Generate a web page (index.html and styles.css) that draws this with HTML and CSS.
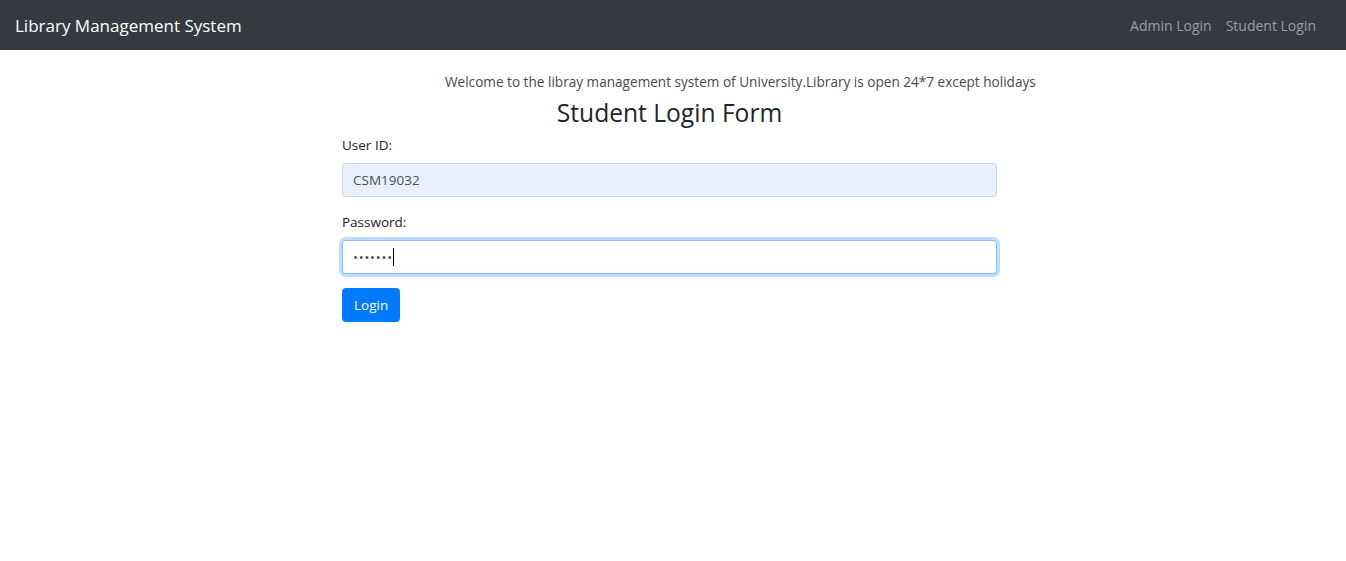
FILE: index.html
```html
<!DOCTYPE html>
<html lang="en">
<head>
<meta charset="utf-8">
<title>Library Management System</title>
<link rel="stylesheet" href="styles.css">
</head>
<body>
<nav class="navbar">
  <a class="brand" href="#">Library Management System</a>
  <ul class="nav">
    <li><a class="nav-link" href="#">Admin Login</a></li>
    <li><a class="nav-link" href="#">Student Login</a></li>
  </ul>
</nav>
<main class="page">
  <p class="welcome">Welcome to the libray management system of University.Library is open 24*7 except holidays</p>
  <section class="login">
    <h3 class="title">Student Login Form</h3>
    <form class="form">
      <div class="form-group">
        <label class="label">User ID:</label>
        <div class="input autofill">CSM19032</div>
      </div>
      <div class="form-group">
        <label class="label">Password:</label>
        <div class="input focus"><span class="dots">•••••••</span><span class="caret"></span></div>
      </div>
      <button type="button" class="btn">Login</button>
    </form>
  </section>
</main>
</body>
</html>
```
FILE: styles.css
```css
* { box-sizing: border-box; }
html, body { margin: 0; padding: 0; background: #fff; }
body {
  font-family: "Open Sans", "Noto Sans", sans-serif;
  font-size: 14px;
  color: #212529;
}
.navbar {
  height: 50px;
  background: #343a40;
  display: flex;
  align-items: center;
  justify-content: space-between;
  padding: 0 23px 0 15px;
}
.brand {
  color: #fff;
  text-decoration: none;
  font-size: 17px;
}
.nav {
  list-style: none;
  margin: 0;
  padding: 0;
  display: flex;
}
.nav-link {
  display: block;
  padding: 0 7px;
  color: rgba(255,255,255,.5);
  text-decoration: none;
  font-size: 14px;
}
.page {
  padding-top: 22px;
}
.welcome {
  margin: 0 0 6px 445px;
  font-size: 13.6px;
  line-height: 20px;
  color: #4a4a4a;
}
.login {
  width: 655px;
  margin-left: 342px;
}
.title {
  margin: 0 0 7px;
  text-align: center;
  font-size: 24.6px;
  font-weight: 400;
  line-height: 30px;
  color: #212529;
}
.form-group { margin-bottom: 14.5px; }
.label {
  display: block;
  font-size: 13.5px;
  line-height: 21.6px;
  margin-bottom: 6.5px;
  color: #212529;
}
.input {
  height: 34px;
  border: 1px solid #ced4da;
  border-radius: 3.6px;
  padding: 0 10px;
  display: flex;
  align-items: center;
  font-size: 13.5px;
  color: #495057;
}
.autofill { background: #e8f0fe; }
.focus {
  background: #fff;
  border-color: #80bdff;
  box-shadow: 0 0 0 3px rgba(0,123,255,.25);
}
.dots {
  font-size: 13px;
  letter-spacing: 0.8px;
  color: #495057;
}
.caret {
  display: inline-block;
  width: 1px;
  height: 18px;
  background: #000;
  margin-left: 0;
}
.btn {
  height: 34px;
  padding: 0 11px;
  border: 1px solid #007bff;
  background: #007bff;
  color: #fff;
  border-radius: 3.6px;
  font-family: inherit;
  font-size: 13.5px;
  cursor: pointer;
}
```
